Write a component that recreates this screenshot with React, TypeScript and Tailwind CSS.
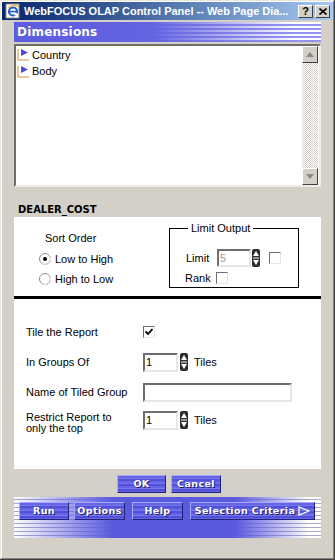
import type { ReactNode } from 'react';

const sans = "font-['Liberation_Sans',Arial,sans-serif]";
const verd = "font-['DejaVu_Sans',Verdana,sans-serif]";

const sunken =
  'border-2 border-t-[#6e6e6e] border-l-[#6e6e6e] border-b-[#e8e6e0] border-r-[#e8e6e0] bg-white';

const Spinner = () => (
  <svg width="8" height="18" viewBox="0 0 8 18" className="shrink-0">
    <rect x="0" y="0" width="8" height="18" rx="2" fill="#2e2e2e" />
    <path d="M4 2 L7 7 H1 Z" fill="#fff" />
    <rect x="1" y="8" width="6" height="2" fill="#9a9a9a" />
    <path d="M4 16 L7 11 H1 Z" fill="#fff" />
  </svg>
);

const Checkbox = ({ checked }: { checked?: boolean }) => (
  <div className={`w-[12px] h-[12px] ${sunken} border-[1px] flex items-center justify-center`}>
    {checked && (
      <svg width="8" height="8" viewBox="0 0 8 8">
        <path d="M0.5 3.5 L3 6 L7.5 1" stroke="#000" strokeWidth="1.8" fill="none" />
      </svg>
    )}
  </div>
);

const Radio = ({ checked }: { checked?: boolean }) => (
  <svg width="12" height="12" viewBox="0 0 12 12" className="shrink-0">
    <circle cx="6" cy="6" r="5.5" fill="#fff" stroke="#8a8a8a" />
    <path d="M2 10 A5.5 5.5 0 0 0 10 2" stroke="#e0ded8" fill="none" />
    {checked && <circle cx="6" cy="6" r="2" fill="#000" />}
  </svg>
);

const BlueButton = ({ children, w }: { children: ReactNode; w: string }) => (
  <div
    className={`${w} h-[18px] flex items-center justify-center whitespace-nowrap border border-t-[#a8a8ff] border-l-[#a8a8ff] border-b-[#22227a] border-r-[#22227a] [background-image:repeating-linear-gradient(to_bottom,#6464e4_0_2px,#7878ea_2px_3px,#5050d8_3px_5px)] text-white text-[9.5px] font-bold tracking-[0.4px] ${verd} [text-shadow:1px_1px_0_#1e1e70]`}
  >
    {children}
  </div>
);

const TreeIcon = () => (
  <svg width="14" height="14" viewBox="0 0 14 14" className="shrink-0">
    <path d="M1 1 V12 H12" stroke="#d9913a" strokeWidth="1" fill="none" />
    <path d="M4 1 L11 4.5 L4 8 Z" fill="#4a4ae0" />
  </svg>
);

const ScrollBtn = ({ up }: { up?: boolean }) => (
  <div className="w-[16px] h-[17px] bg-[#d4d0c8] border border-t-white border-l-white border-b-[#404040] border-r-[#404040] flex items-center justify-center">
    <svg width="8" height="5" viewBox="0 0 8 5">
      <path d={up ? 'M4 0 L8 5 H0 Z' : 'M0 0 H8 L4 5 Z'} fill="#8a8a8a" />
    </svg>
  </div>
);

export default function App() {
  return (
    <div className="w-[335px] h-[560px] bg-[#d4d0c8] flex flex-col shadow-[inset_-1px_-1px_#404040,inset_1px_1px_#e8e6e0,inset_-2px_-2px_#808080,inset_2px_2px_#fff] overflow-hidden">
      {/* title bar */}
      <div className="mx-[2px] mt-[2px] h-[18px] bg-linear-to-r from-[#0a246a] to-[#a6caf0] flex items-center pl-[3px] pr-[3px] gap-[3px]">
        <svg width="16" height="16" viewBox="0 0 16 16" className="shrink-0">
          <rect x="1" y="1" width="13" height="14" fill="#fff" stroke="#8a8a8a" />
          <circle cx="8" cy="8.5" r="4" fill="none" stroke="#1f5fd0" strokeWidth="2.2" />
          <rect x="4" y="7.8" width="8" height="1.6" fill="#1f5fd0" />
          <rect x="9.5" y="10" width="3" height="2.5" fill="#fff" />
          <path d="M3 5 Q9 1 14 4" stroke="#e8b040" strokeWidth="1.2" fill="none" />
        </svg>
        <div className={`flex-1 min-w-0 text-white text-[11px] font-bold whitespace-nowrap ${sans}`}>
          WebFOCUS OLAP Control Panel -- Web Page Dia...
        </div>
        <div className="flex gap-[2px] shrink-0">
          <div className={`w-[15px] h-[13px] bg-[#d4d0c8] border border-t-white border-l-white border-b-[#404040] border-r-[#404040] flex items-center justify-center text-[11px] font-bold leading-none text-black ${sans}`}>
            ?
          </div>
          <div className="w-[15px] h-[13px] bg-[#d4d0c8] border border-t-white border-l-white border-b-[#404040] border-r-[#404040] flex items-center justify-center">
            <svg width="8" height="7" viewBox="0 0 8 7">
              <path d="M0.5 0.5 L7.5 6.5 M7.5 0.5 L0.5 6.5" stroke="#000" strokeWidth="1.6" />
            </svg>
          </div>
        </div>
      </div>

      <div className="px-[14px] flex flex-col">
        {/* Dimensions band */}
        <div className="mt-[2px] h-[20px] flex items-center pl-[3px] [background-image:linear-gradient(to_right,#5c5cde_0%,#6464e2_45%,rgba(110,110,230,0)_92%),repeating-linear-gradient(to_bottom,#ffffff_0_2px,#9494ee_2px_4px)]">
          <span className={`text-white text-[12px] font-bold ${verd} tracking-[0.2px]`}>Dimensions</span>
        </div>

        {/* list */}
        <div className="mt-[2px] h-[143px] border-2 border-t-[#6e6e6e] border-l-[#6e6e6e] border-b-[#eeece6] border-r-[#eeece6] bg-white flex">
          <div className={`flex-1 pt-[1px] pl-[1px] text-[11px] ${sans} text-black`}>
            <div className="h-[16px] flex items-center gap-[1px]">
              <TreeIcon />
              <span>Country</span>
            </div>
            <div className="h-[17px] flex items-center gap-[1px]">
              <TreeIcon />
              <span>Body</span>
            </div>
          </div>
          <div className="w-[16px] flex flex-col mr-[1px]">
            <ScrollBtn up />
            <div className="flex-1 [background-image:repeating-conic-gradient(#d4d0c8_0_25%,#ffffff_0_50%)] bg-[length:2px_2px]" />
            <ScrollBtn />
          </div>
        </div>

        <div className={`mt-[15px] h-[15px] pl-[4px] text-[10px] font-bold ${verd} text-black leading-[15px]`}>DEALER_COST</div>

        {/* white panel */}
        <div className={`h-[252px] bg-white flex flex-col text-[11px] ${sans} text-black`}>
          <div className="h-[79px] flex">
            <div className="w-[155px] pl-[25px] pt-[15px]">
              <div className="h-[13px] leading-[13px] pl-[6px]">Sort Order</div>
              <div className="mt-[4px] h-[20px] flex items-center gap-[4px]">
                <Radio checked />
                <span>Low to High</span>
              </div>
              <div className="h-[20px] flex items-center gap-[4px]">
                <Radio />
                <span>High to Low</span>
              </div>
            </div>
            <fieldset className="mt-[5px] w-[130px] h-[66px] border border-black pl-[16px] pr-0 m-0">
              <legend className="ml-[2px] px-[3px] leading-[13px]">Limit Output</legend>
              <div className="mt-[14px] h-[18px] flex items-center">
                <span className="w-[31px]">Limit</span>
                <div className={`w-[34px] h-[18px] ${sunken} text-[#9a9a9a] leading-[14px] pl-[1px]`}>5</div>
                <div className="ml-[1px]">
                  <Spinner />
                </div>
                <div className="ml-[9px]">
                  <Checkbox />
                </div>
              </div>
              <div className="mt-[2px] h-[18px] flex items-center">
                <span className="w-[31px] -ml-[1px]">Rank</span>
                <Checkbox />
              </div>
            </fieldset>
          </div>
          <div className="h-[3px] bg-black" />

          <div className="flex flex-col pl-[12px] pt-[23px]">
            <div className="h-[20px] flex items-center">
              <span className="w-[117px]">Tile the Report</span>
              <Checkbox checked />
            </div>
            <div className="mt-[10px] h-[20px] flex items-center">
              <span className="w-[117px]">In Groups Of</span>
              <div className={`w-[35px] h-[19px] ${sunken} leading-[15px] pl-[1px]`}>1</div>
              <div className="ml-[2px]">
                <Spinner />
              </div>
              <span className="ml-[6px]">Tiles</span>
            </div>
            <div className="mt-[10px] h-[20px] flex items-center">
              <span className="w-[117px]">Name of Tiled Group</span>
              <div className={`w-[149px] h-[19px] ${sunken}`} />
            </div>
            <div className="mt-[9px] flex items-start">
              <span className="w-[117px] leading-[11px] pt-[1px]">
                Restrict Report to
                <br />
                only the top
              </span>
              <div className={`w-[35px] h-[19px] ${sunken} leading-[15px] pl-[1px]`}>1</div>
              <div className="ml-[2px]">
                <Spinner />
              </div>
              <span className="ml-[6px] leading-[19px]">Tiles</span>
            </div>
          </div>
        </div>

        {/* OK / Cancel */}
        <div className="mt-[6px] flex justify-center gap-[5px] pl-[3px]">
          <BlueButton w="w-[49px]">OK</BlueButton>
          <BlueButton w="w-[50px]">Cancel</BlueButton>
        </div>

        {/* bottom bar */}
        <div className="mt-[4px] h-[41px] pt-[5px] px-[5px] [background-image:linear-gradient(to_right,rgba(90,90,222,0)_0%,#5a5ade_32%,#5a5ade_72%,rgba(90,90,222,0)_96%),repeating-linear-gradient(to_bottom,#ffffff_0_2px,#a8a8cc_2px_3px,#ffffff_3px_4px)]">
          <div className="flex">
            <BlueButton w="w-[50px]">Run</BlueButton>
            <div className="ml-[5px]">
              <BlueButton w="w-[51px]">Options</BlueButton>
            </div>
            <div className="ml-[7px]">
              <BlueButton w="w-[51px]">Help</BlueButton>
            </div>
            <div className="ml-[7px]">
              <BlueButton w="w-[125px]">
                <span>Selection Criteria</span>
                <svg width="12" height="10" viewBox="0 0 12 10" className="ml-[3px] shrink-0">
                  <path d="M1 1 L11 5 L1 9 Z" fill="none" stroke="#fff" strokeWidth="1.3" />
                </svg>
              </BlueButton>
            </div>
          </div>
        </div>
      </div>
    </div>
  );
}
